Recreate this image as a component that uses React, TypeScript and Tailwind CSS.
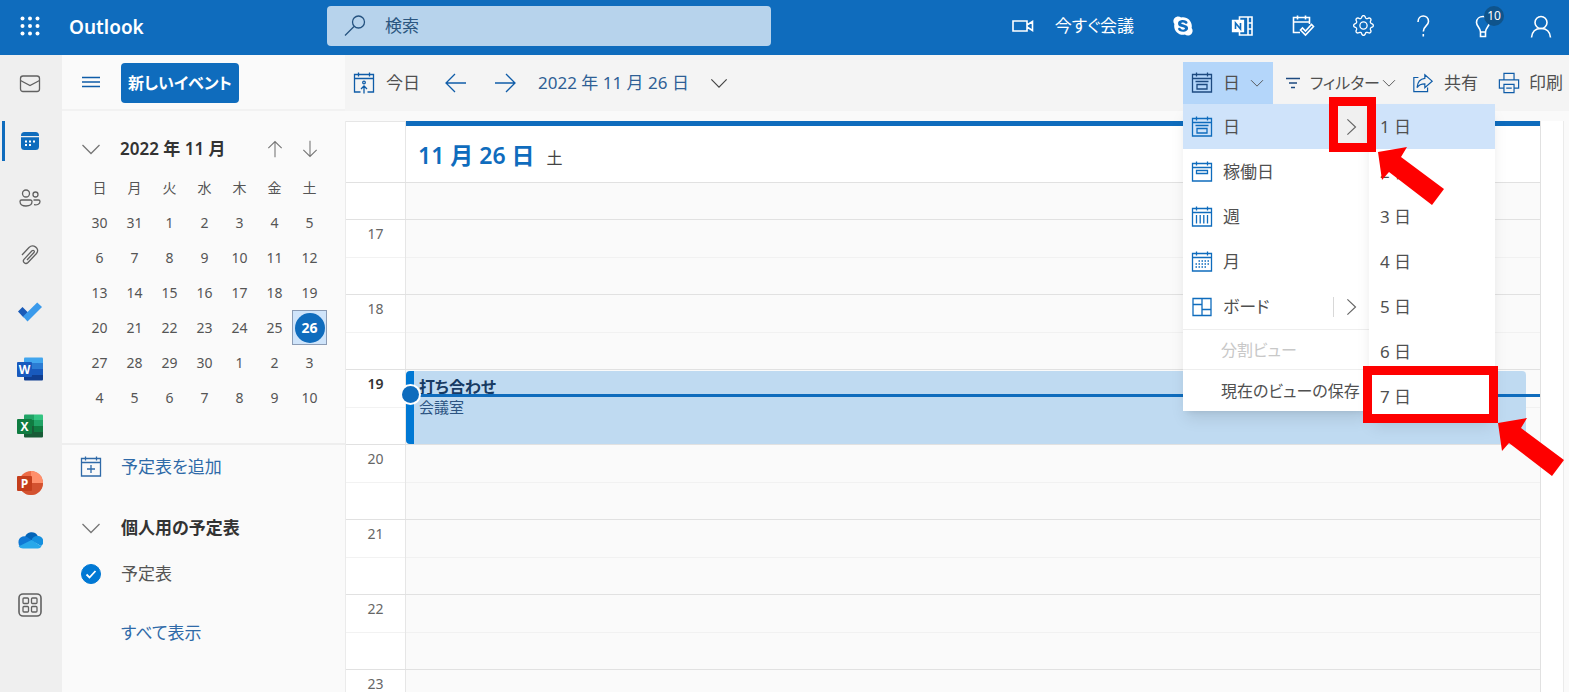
import { useState, type ReactNode } from 'react';
import { clsx } from 'clsx';
import { BsGear } from 'react-icons/bs';
import { FaSkype } from 'react-icons/fa';

const WEEKDAYS = ['日', '月', '火', '水', '木', '金', '土'];
const WEEKS = [
  [30, 31, 1, 2, 3, 4, 5],
  [6, 7, 8, 9, 10, 11, 12],
  [13, 14, 15, 16, 17, 18, 19],
  [20, 21, 22, 23, 24, 25, 26],
  [27, 28, 29, 30, 1, 2, 3],
  [4, 5, 6, 7, 8, 9, 10],
];
const HOURS = [17, 18, 19, 20, 21, 22, 23];
const DAY_COUNTS = [1, 2, 3, 4, 5, 6, 7];

function Icon({
  children,
  className = 'size-6',
  viewBox = '0 0 24 24',
}: {
  children: ReactNode;
  className?: string;
  viewBox?: string;
}) {
  return (
    <svg
      viewBox={viewBox}
      className={clsx('shrink-0', className)}
      fill="none"
      stroke="currentColor"
      strokeWidth="1.3"
      aria-hidden="true"
    >
      {children}
    </svg>
  );
}

function Chevron({ className }: { className?: string }) {
  return (
    <Icon className={className} viewBox="0 0 20 20">
      <path d="M1.5 6 10 14.5 18.5 6" />
    </Icon>
  );
}

function ChevronRight({ className }: { className?: string }) {
  return (
    <Icon className={className} viewBox="0 0 20 20">
      <path d="M6 1.500 15 10l-9 8.500" />
    </Icon>
  );
}

function CalendarFrame({ children }: { children: ReactNode }) {
  return (
    <Icon>
      <path d="M2.500 3.500h19v17.500h-19zM2.500 7.500h19M6.500 1.500v4M17.500 1.500v4" />
      {children}
    </Icon>
  );
}

function DayIcon() {
  return (
    <CalendarFrame>
      <path d="M5.500 10.500h13M7 13.500h10v4.500H7z" />
    </CalendarFrame>
  );
}

function WorkWeekIcon() {
  return (
    <CalendarFrame>
      <path d="M6.500 10.500h11v3h-11z" />
    </CalendarFrame>
  );
}

function WeekIcon() {
  return (
    <CalendarFrame>
      <path d="M6.500 10v8.500M10.200 10v8.500M13.800 10v8.500M17.500 10v8.500" />
    </CalendarFrame>
  );
}

function MonthIcon() {
  return (
    <CalendarFrame>
      <path
        d="M8.500 11h10.500M5.500 14h13.500M5.500 17h10.500"
        strokeDasharray="1.500 1.500"
        strokeWidth="1.500"
      />
    </CalendarFrame>
  );
}

function BoardIcon() {
  return (
    <Icon>
      <path d="M3 3.500h18v17H3zM12 3.500v17M3 9.500h9M12 14.500h9" />
    </Icon>
  );
}

function OfficeIcon({ letter }: { letter: 'W' | 'X' | 'P' }) {
  return (
    <svg viewBox="0 0 26 24" className="h-6 w-[26px]" aria-hidden="true">
      {letter === 'W' && (
        <>
          <path d="M7 1.500A1 1 0 0 1 8 .5h17a1 1 0 0 1 1 1V6H7z" fill="#41a5ee" />
          <path d="M7 6h19v6H7z" fill="#2b7cd3" />
          <path d="M7 12h19v6H7z" fill="#185abd" />
          <path d="M7 18h19v4.500a1 1 0 0 1-1 1H8a1 1 0 0 1-1-1z" fill="#103f91" />
          <rect y="5" width="15" height="15" rx="1" fill="#185abd" />
        </>
      )}
      {letter === 'X' && (
        <>
          <path d="M8 .5h9V6H7V1.500a1 1 0 0 1 1-1z" fill="#21a366" />
          <path d="M17 .5h8a1 1 0 0 1 1 1V6h-9z" fill="#33c481" />
          <path d="M7 6h10v6H7zM17 12h9v6h-9z" fill="#107c41" />
          <path d="M17 6h9v6h-9z" fill="#21a366" />
          <path d="M7 12h10v6h9v4.500a1 1 0 0 1-1 1H8a1 1 0 0 1-1-1z" fill="#185c37" />
          <rect y="5" width="15" height="15" rx="1" fill="#107c41" />
        </>
      )}
      {letter === 'P' && (
        <>
          <circle cx="14" cy="12" r="12" fill="#ed6c47" />
          <path d="M14 0a12 12 0 0 1 12 12H14z" fill="#ff8f6b" />
          <path d="M2 12h24a12 12 0 0 1-24 0z" fill="#d35230" />
          <rect y="5" width="15" height="15" rx="1" fill="#c43e1c" />
        </>
      )}
      <text
        x="7.500"
        y="16.500"
        textAnchor="middle"
        fill="#fff"
        fontSize="12"
        fontWeight="700"
        fontFamily="Open Sans, sans-serif"
      >
        {letter}
      </text>
    </svg>
  );
}

function RailButton({
  label,
  active,
  children,
}: {
  label: string;
  active?: boolean;
  children: ReactNode;
}) {
  return (
    <button
      type="button"
      aria-label={label}
      className={clsx(
        'ml-0.5 flex h-10 items-center justify-center border-l-3 pr-[7px]',
        active ? 'border-l-[#0f6cbd] text-[#0f6cbd]' : 'border-l-transparent text-[#616161]',
      )}
    >
      {children}
    </button>
  );
}

function AppRail() {
  return (
    <nav
      aria-label="アプリ"
      className="flex w-[62px] shrink-0 flex-col gap-[17px] bg-[#efefef] pt-[9px]"
    >
      <RailButton label="メール">
        <Icon>
          <rect x="2.500" y="4" width="19" height="15.500" rx="2.500" />
          <path d="m2.500 8.500 9.500 5 9.500-5" />
        </Icon>
      </RailButton>
      <RailButton label="予定表" active>
        <svg viewBox="0 0 24 24" className="size-6" fill="currentColor" aria-hidden="true">
          <path d="M3 6.500A3.500 3.500 0 0 1 6.500 3h11A3.500 3.500 0 0 1 21 6.500V7H3z" />
          <path d="M3 8.200h18v9.300a3.500 3.500 0 0 1-3.500 3.500h-11A3.500 3.500 0 0 1 3 17.500z" />
          <path
            d="M7 12.500h2m2 0h2m2 0h2M7 16h2m2 0h2"
            stroke="#fff"
            strokeWidth="2"
            fill="none"
          />
        </svg>
      </RailButton>
      <RailButton label="連絡先">
        <Icon>
          <circle cx="8" cy="7.500" r="3.500" />
          <circle cx="17.500" cy="8.500" r="2.500" />
          <path d="M3.500 14h9a1.500 1.500 0 0 1 1.500 1.500c0 3-2.500 4.500-6 4.500s-6-1.500-6-4.500A1.500 1.500 0 0 1 3.500 14zM15.500 14h5a1.500 1.500 0 0 1 1.500 1.500c0 2.500-2.500 3.700-6 3.200" />
        </Icon>
      </RailButton>
      <RailButton label="ファイル">
        <Icon>
          <path d="m4 12 7-7.500c4-4 11.500 1 7.500 6l-8.500 9c-2.500 2.500-6-.5-4-3.200l8-8.500c1.500-1.200 3 .2 2 1.700l-7 7.500" />
        </Icon>
      </RailButton>
      <RailButton label="To Do">
        <svg viewBox="0 0 24 24" className="size-6" aria-hidden="true">
          <path d="m0 11.500 4.500-4.500 5.500 5.500-4.500 5z" fill="#1a5bb8" />
          <path d="m5 16.500 14.200-14L24 7.100 9.500 21.500z" fill="#3a9aeb" />
        </svg>
      </RailButton>
      <RailButton label="Word">
        <OfficeIcon letter="W" />
      </RailButton>
      <RailButton label="Excel">
        <OfficeIcon letter="X" />
      </RailButton>
      <RailButton label="PowerPoint">
        <OfficeIcon letter="P" />
      </RailButton>
      <RailButton label="OneDrive">
        <svg viewBox="0 0 26 18" className="h-[18px] w-[26px]" aria-hidden="true">
          <path d="M8 6a7 7 0 0 1 12.500-1.500L22 9 12 11z" fill="#0364b8" />
          <path d="M5.500 5.500A6 6 0 0 1 10 6l9 6-13 5A6 6 0 0 1 5.500 5.500z" fill="#0f78d4" />
          <path d="M14.500 9.500a6 6 0 0 1 6-4.500A5.500 5.500 0 0 1 24 15z" fill="#1490df" />
          <path d="m14.500 9 10 6.500A5 5 0 0 1 21 17.500H6a6 6 0 0 1-4.500-2z" fill="#28a8ea" />
        </svg>
      </RailButton>
      <RailButton label="その他のアプリ">
        <Icon className="mt-4 size-6">
          <rect x="1" y="1" width="22" height="22" rx="4" strokeWidth="1.600" />
          <rect x="5" y="5" width="5.500" height="5.500" rx="1" />
          <rect x="13.500" y="5" width="5.500" height="5.500" rx="1" />
          <rect x="5" y="13.500" width="5.500" height="5.500" rx="1" />
          <rect x="13.500" y="13.500" width="5.500" height="5.500" rx="1" />
        </Icon>
      </RailButton>
    </nav>
  );
}

function HeaderButton({
  label,
  className = 'w-[60px]',
  children,
}: {
  label: string;
  className?: string;
  children: ReactNode;
}) {
  return (
    <button
      type="button"
      aria-label={label}
      className={clsx('relative flex h-12 items-center justify-center', className)}
    >
      {children}
    </button>
  );
}

function Header() {
  return (
    <header className="flex h-[55px] shrink-0 items-center bg-[#0f6cbd] text-white">
      <button
        type="button"
        aria-label="アプリ起動ツール"
        className="flex w-[59px] shrink-0 items-center justify-center pb-1"
      >
        <svg viewBox="0 0 20 20" className="size-5" fill="currentColor" aria-hidden="true">
          {[2.5, 10, 17.5].map((y) =>
            [2.5, 10, 17.5].map((x) => <circle key={`${x}-${y}`} cx={x} cy={y} r="2" />),
          )}
        </svg>
      </button>
      <a href="#" className="ml-[10px] w-[258px] shrink-0 text-[19px] font-semibold">
        Outlook
      </a>
      <label className="mb-1 flex h-10 w-[444px] items-center rounded bg-[#b7d3ec] pl-4 text-[#25527f]">
        <Icon className="size-6">
          <circle cx="15.500" cy="8" r="6" />
          <path d="m11 12.500-9 9" />
        </Icon>
        <input
          type="text"
          aria-label="検索"
          placeholder="検索"
          className="ml-[18px] min-w-0 flex-1 bg-transparent outline-none placeholder:text-[#2b5680]"
        />
      </label>
      <div className="mb-1 ml-auto flex items-center">
        <button type="button" className="mr-[19px] flex items-center gap-5 whitespace-nowrap">
          <Icon>
            <path d="M2 7h14v10H2zM16 11l5.500-3.500v9L16 13" strokeWidth="1.600" />
          </Icon>
          今すぐ会議
        </button>
        <HeaderButton label="Skype">
          <FaSkype className="size-[22px]" />
        </HeaderButton>
        <HeaderButton label="OneNote">
          <Icon>
            <path
              d="M8.500 7V3h12.500v18H8.500V17M17 3v18M17 9h4M17 15h4"
              strokeWidth="1.600"
            />
            <path d="M1.500 6.500h11v11h-11z" fill="#fff" />
            <path d="M4.500 15V9l5 6V9" stroke="#0f6cbd" strokeWidth="1.600" />
          </Icon>
        </HeaderButton>
        <HeaderButton label="今日の予定">
          <Icon>
            <path
              d="M9 18.500H2.500V3.500h16V10M2.500 8h16M6.500 1.500v4M14.500 1.500v4"
              strokeWidth="1.600"
            />
            <path d="m9.500 16 2-2 3 3 6-6.500 2 2-8 8.500z" strokeWidth="1.600" />
          </Icon>
        </HeaderButton>
        <HeaderButton label="設定">
          <BsGear className="size-[21px]" />
        </HeaderButton>
        <HeaderButton label="ヘルプ">
          <Icon>
            <path
              d="M7 8c0-8 10.500-8 10.500-.5 0 4.500-5.200 4.500-5.200 10M12.300 20v2.500"
              strokeWidth="1.600"
            />
          </Icon>
        </HeaderButton>
        <HeaderButton label="新機能">
          <Icon>
            <path
              d="M9.500 18C9.500 13.500 5.500 12.500 5.500 8.500c0-8 13-8 13 0 0 4-4 5-4 9.500zM9.500 18v4.500h5V18"
              strokeWidth="1.600"
            />
          </Icon>
          <span className="absolute top-1 left-[31px] flex size-5 items-center justify-center rounded-full bg-[#0f548c] text-xs">
            10
          </span>
        </HeaderButton>
        <HeaderButton label="アカウント" className="w-14">
          <Icon>
            <circle cx="12" cy="8.500" r="6" strokeWidth="1.600" />
            <path d="M2.500 23.500c.5-5.500 4-9 9.500-9s9 3.500 9.500 9" strokeWidth="1.600" />
          </Icon>
        </HeaderButton>
      </div>
    </header>
  );
}

function MiniCalendar() {
  return (
    <section className="flex flex-col border-b-2 border-[#eeeeee] pt-5 pr-[18px] pb-7 pl-[19px]">
      <div className="flex h-9 items-center">
        <button type="button" aria-label="折りたたむ" className="text-[#767676]">
          <Chevron className="size-5" />
        </button>
        <h2 className="ml-[19px] font-semibold text-[#333]">2022 年 11 月</h2>
        <div className="ml-auto flex text-[#767676]">
          <button type="button" aria-label="前の月" className="flex w-[35px] justify-center">
            <Icon className="size-5">
              <path d="M12 22V3M4 11l8-8 8 8" />
            </Icon>
          </button>
          <button type="button" aria-label="次の月" className="flex w-[35px] justify-center">
            <Icon className="size-5">
              <path d="M12 2v19M4 13l8 8 8-8" />
            </Icon>
          </button>
        </div>
      </div>
      <table className="mt-[3px] w-[245px] table-fixed self-end text-center text-sm text-[#555]">
        <thead>
          <tr>
            {WEEKDAYS.map((day) => (
              <th key={day} className="h-[35px] p-0 font-normal">
                {day}
              </th>
            ))}
          </tr>
        </thead>
        <tbody>
          {WEEKS.map((week, row) => (
            <tr key={row}>
              {week.map((date) => {
                const selected = row === 3 && date === 26;
                return (
                  <td key={date} className="h-[35px] p-0">
                    <button
                      type="button"
                      className={clsx(
                        'flex h-[35px] w-full items-center justify-center',
                        selected && 'border border-[#8b9cb5] bg-[#cfe4fa]',
                      )}
                    >
                      {selected ? (
                        <span className="flex size-[30px] items-center justify-center rounded-full bg-[#0f6cbd] font-bold text-white">
                          {date}
                        </span>
                      ) : (
                        date
                      )}
                    </button>
                  </td>
                );
              })}
            </tr>
          ))}
        </tbody>
      </table>
    </section>
  );
}

function Sidebar() {
  return (
    <aside className="flex w-[283px] shrink-0 flex-col bg-[#fafafa]">
      <div className="flex h-14 shrink-0 items-center gap-5 border-b-2 border-[#f2f2f2] pl-[19px]">
        <button type="button" aria-label="ナビゲーション" className="text-[#0f5ca8]">
          <Icon className="size-5" viewBox="0 0 20 20">
            <path d="M1 5.500h18M1 10h18M1 14.500h18" />
          </Icon>
        </button>
        <button
          type="button"
          className="mt-0.5 h-10 w-[118px] rounded-sm bg-[#0f6cbd] text-base font-semibold text-white"
        >
          新しいイベント
        </button>
      </div>
      <MiniCalendar />
      <div className="flex flex-col pl-[17px] text-[17px]">
        <a href="#" className="flex h-11 items-center gap-[18px] text-[#2f6aa8]">
          <CalendarFrame>
            <path d="M12 10v8M8 14h8" />
          </CalendarFrame>
          予定表を追加
        </a>
        <button
          type="button"
          className="mt-[17px] flex h-11 items-center gap-[18px] font-semibold text-[#333]"
        >
          <span className="flex w-6 justify-center text-[#767676]">
            <Chevron className="size-5" />
          </span>
          個人用の予定表
        </button>
        <label className="flex h-[47px] items-center gap-[18px] text-[#555]">
          <span className="relative flex size-6 items-center justify-center">
            <input
              type="checkbox"
              defaultChecked
              className="size-5 appearance-none rounded-full border border-[#0078d4] checked:bg-[#0078d4]"
            />
            <Icon className="pointer-events-none absolute size-5 text-white" viewBox="0 0 20 20">
              <path d="m5.500 10.500 3 3 6-6.500" strokeWidth="1.800" />
            </Icon>
          </span>
          予定表
        </label>
        <a href="#" className="mt-3 flex h-12 items-center pl-[42px] text-[#2f6aa8]">
          すべて表示
        </a>
      </div>
    </aside>
  );
}

function MenuItem({
  icon,
  label,
  submenu,
  active,
}: {
  icon: ReactNode;
  label: string;
  submenu?: boolean;
  active?: boolean;
}) {
  return (
    <button
      type="button"
      role="menuitem"
      className={clsx('flex h-[45px] w-full items-center pl-[7px]', active && 'bg-[#cfe3fa]')}
    >
      <span className="flex text-[#0f6cbd]">{icon}</span>
      <span className="ml-[9px]">{label}</span>
      {submenu && (
        <span
          className={clsx(
            'ml-auto flex items-center justify-center text-[#666]',
            active ? 'h-full w-9 bg-[#f0f0f0]' : 'h-5 w-9 border-l border-[#d8d8d8]',
          )}
        >
          <ChevronRight className="size-[18px]" />
        </span>
      )}
    </button>
  );
}

function ViewMenu() {
  return (
    <div className="absolute top-full left-0 z-20 flex items-start text-[#505050]">
      <div role="menu" aria-label="表示" className="w-[186px] bg-white shadow-lg">
        <MenuItem icon={<DayIcon />} label="日" submenu active />
        <MenuItem icon={<WorkWeekIcon />} label="稼働日" />
        <MenuItem icon={<WeekIcon />} label="週" />
        <MenuItem icon={<MonthIcon />} label="月" />
        <MenuItem icon={<BoardIcon />} label="ボード" submenu />
        <button
          type="button"
          role="menuitem"
          disabled
          className="flex h-[41px] w-full items-center border-y border-[#eeeeee] pl-[38px] text-base text-[#c8c8c8]"
        >
          分割ビュー
        </button>
        <button
          type="button"
          role="menuitem"
          className="flex h-[41px] w-full items-center pl-[38px] text-base whitespace-nowrap"
        >
          現在のビューの保存
        </button>
      </div>
      <div role="menu" aria-label="日数" className="w-[126px] bg-white shadow-lg">
        {DAY_COUNTS.map((count) => (
          <button
            key={count}
            type="button"
            role="menuitem"
            className={clsx(
              'flex h-[45px] w-full items-center pl-[11px]',
              count === 1 && 'bg-[#cfe3fa]',
            )}
          >
            {count} 日
          </button>
        ))}
      </div>
      {/* Guide marks that lie over the two menus */}
      <span className="pointer-events-none absolute top-[-7px] left-[146px] h-[55px] w-[47px] border-9 border-[#fe0000]" />
      <span className="pointer-events-none absolute top-[262px] left-[180px] h-[57px] w-[135px] border-9 border-[#fe0000]" />
      <GuideArrow className="top-[43px] left-[195px]" />
      <GuideArrow className="top-[314px] left-[315px]" />
    </div>
  );
}

function GuideArrow({ className }: { className: string }) {
  return (
    <svg
      viewBox="0 0 67 58"
      className={clsx('pointer-events-none absolute h-[58px] w-[67px]', className)}
      aria-hidden="true"
    >
      <path d="M0 5 29 0 23 10 66 42 54 58 11 25 4 33z" fill="#fe0000" />
    </svg>
  );
}

function Toolbar() {
  const [menuOpen, setMenuOpen] = useState(true);

  return (
    <div className="flex h-14 shrink-0 items-center bg-[#f4f4f4] pl-[7px] text-[17px] whitespace-nowrap text-[#505050]">
      <button type="button" className="flex items-center gap-[10px]">
        <span className="flex text-[#0f5ca8]">
          <Icon>
            <path d="M8.500 21h-6V3.500h19V21h-6M2.500 7.500h19M6.500 1.500v4M17.500 1.500v4M12 22.500V15M9 18l3-3 3 3" />
            <circle cx="12" cy="11.500" r="1.300" />
          </Icon>
        </span>
        今日
      </button>
      <button type="button" aria-label="前の日" className="ml-6 text-[#0f5ca8]">
        <Icon>
          <path d="M22 12H2M11 3l-9 9 9 9" />
        </Icon>
      </button>
      <button type="button" aria-label="次の日" className="ml-[25px] text-[#0f5ca8]">
        <Icon>
          <path d="M2 12h20M13 3l9 9-9 9" />
        </Icon>
      </button>
      <button type="button" className="ml-[21px] flex items-center gap-[21px] text-[#2f5f95]">
        2022 年 11 月 26 日
        <Chevron className="size-[18px] text-[#444]" />
      </button>
      <div className="ml-auto flex h-full items-center">
        <div className="relative mt-[7px] flex self-start">
          <button
            type="button"
            aria-haspopup="menu"
            aria-expanded={menuOpen}
            onClick={() => setMenuOpen(!menuOpen)}
            className="flex h-[42px] w-[90px] items-center bg-[#b4d6fa] pl-[7px]"
          >
            <span className="flex text-[#1d4a80]">
              <DayIcon />
            </span>
            <span className="ml-[9px]">日</span>
            <Chevron className="ml-[10px] size-[14px]" />
          </button>
          {menuOpen && <ViewMenu />}
        </div>
        <button type="button" className="ml-3 flex items-center">
          <Icon className="size-4 text-[#1d4a80]" viewBox="0 0 16 16">
            <path d="M1 3.500h14M4 8h8M6 12.500h4" />
          </Icon>
          <span className="ml-[9px] text-base">フィルター</span>
          <Chevron className="ml-0.5 size-[14px]" />
        </button>
        <button type="button" className="ml-4 flex items-center gap-[10px]">
          <Icon className="size-[22px] text-[#0f5ca8]">
            <path d="M7 6H2v15.500h15V17M14 3l8 7-8 7v-4c-4 0-6.500 1-8.500 4 .5-6 3.500-9.500 8.500-10z" />
          </Icon>
          共有
        </button>
        <button type="button" className="mr-[6px] ml-5 flex items-center gap-[9px]">
          <Icon className="size-[22px] text-[#0f5ca8]">
            <path d="M6.500 8.500v-7h11v7M6.500 17.500H1.500v-9h21v9h-5M6.500 13.500h11v9h-11zM9 17.500h6" />
          </Icon>
          印刷
        </button>
      </div>
    </div>
  );
}

function DayView() {
  return (
    <div className="flex min-h-0 flex-1 overflow-hidden bg-[#fafafa] pt-[10px] pr-[5px]">
      <div className="flex min-w-0 flex-1 flex-col border-x border-[#ebebeb] bg-white pr-[22px]">
        <div className="flex h-[62px] shrink-0 border-r border-b border-[#e1e1e1]">
          <div className="w-[60px] shrink-0 border-t border-r border-[#e6e6e6]" />
          <h1 className="flex flex-1 items-baseline gap-3 border-t-[5px] border-[#0f6cbd] pt-3 pl-3 text-[23px] font-semibold text-[#0f6cbd]">
            11 月 26 日
            <span className="text-base font-normal text-[#444]">土</span>
          </h1>
        </div>
        <div className="flex flex-col">
          <div className="flex h-[37px] border-r border-b border-[#e1e1e1]">
            <div className="w-[60px] shrink-0 border-r border-[#e6e6e6]" />
            <div className="flex-1 bg-[#fafafa]" />
          </div>
          {HOURS.map((hour) => (
            <div key={hour} className="flex h-[75px] shrink-0 border-r border-b border-[#e1e1e1]">
              <div
                className={clsx(
                  'flex w-[60px] shrink-0 flex-col border-r border-[#e6e6e6] text-center text-sm',
                  hour === 19 ? 'font-semibold text-[#333]' : 'text-[#666]',
                )}
              >
                <div className="h-[38px] border-b border-[#f2f2f2] pt-1">{hour}</div>
              </div>
              <div className="relative flex-1 bg-[#fafafa]">
                <div className="h-[38px] border-b border-[#f1f1f1]" />
                {hour === 19 && <Appointment />}
              </div>
            </div>
          ))}
        </div>
      </div>
    </div>
  );
}

function Appointment() {
  return (
    <>
      <a
        href="#"
        className="absolute inset-y-0 right-[14px] left-0 mt-px flex flex-col rounded-sm border-l-8 border-[#0078d4] bg-[#bfdaf1] pt-1 pl-[5px] text-[#173a63]"
      >
        <span className="text-base leading-6 font-semibold">打ち合わせ</span>
        <span className="text-[15px] leading-4 text-[#2c5482]">会議室</span>
      </a>
      <div className="absolute inset-x-0 top-6 h-[3px] bg-[#0f6cbd]" />
      <div className="absolute top-4 left-[-4px] size-[17px] rounded-full bg-[#0f6cbd] ring-2 ring-white" />
    </>
  );
}

export default function App() {
  return (
    <div className="flex h-screen flex-col overflow-hidden bg-[#fafafa] font-['Noto_Sans','Noto_Sans_CJK_JP',sans-serif] text-[17px] [font-feature-settings:'palt']">
      <Header />
      <div className="flex min-h-0 flex-1">
        <AppRail />
        <Sidebar />
        <main className="flex min-w-0 flex-1 flex-col">
          <Toolbar />
          <DayView />
        </main>
      </div>
    </div>
  );
}
